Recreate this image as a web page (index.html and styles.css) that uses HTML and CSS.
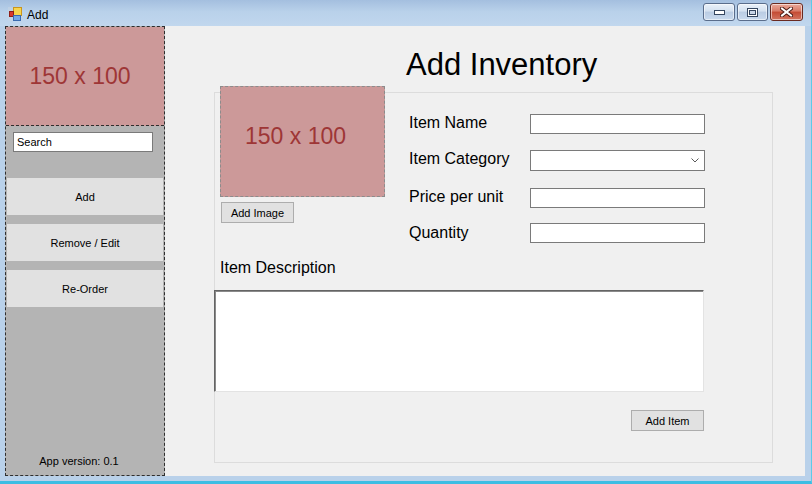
FILE: index.html
```html
<!DOCTYPE html>
<html>
<head>
<meta charset="utf-8">
<title>Add</title>
<link rel="stylesheet" href="styles.css">
</head>
<body>
<div class="window">
  <div class="titlebar">
    <svg class="app-icon" width="14" height="14" viewBox="0 0 14 14">
      <rect x="0" y="0" width="14" height="14" fill="#c9d6e4" opacity="0.5"/>
      <rect x="5.5" y="0.5" width="8" height="8" fill="#f7d54e" stroke="#c9951c"/>
      <rect x="1.5" y="4.5" width="4" height="5" fill="#d8382e" stroke="#8e1f1a"/>
      <rect x="5.5" y="8.5" width="7" height="5" fill="#75a8e6" stroke="#3a6bb0"/>
    </svg>
    <span class="title">Add</span>
    <div class="ctrls">
      <span class="cbtn cmin">
        <svg width="11" height="6" viewBox="0 0 11 6"><rect x="0.5" y="0.5" width="10" height="4" fill="#fff" stroke="#35465f"/></svg>
      </span>
      <span class="cbtn cmax">
        <svg width="11" height="9" viewBox="0 0 11 9"><rect x="0.5" y="0.5" width="10" height="8" fill="#fff" stroke="#35465f"/><rect x="2.5" y="2.5" width="6" height="4" fill="#c8d5e6" stroke="#35465f"/></svg>
      </span>
      <span class="cbtn cclose">
        <svg width="13" height="10" viewBox="0 0 13 10"><path d="M2 1.5 L11 8.5 M11 1.5 L2 8.5" stroke="#4a1a14" stroke-width="4" stroke-linecap="square"/><path d="M2 1.5 L11 8.5 M11 1.5 L2 8.5" stroke="#fff" stroke-width="2" stroke-linecap="square"/></svg>
      </span>
    </div>
  </div>
  <div class="client">
    <aside class="sidebar">
      <div class="ph ph-side"><span>150 x 100</span></div>
      <div class="search">Search</div>
      <div class="navs">
        <div class="navbtn">Add</div>
        <div class="navbtn">Remove / Edit</div>
        <div class="navbtn">Re-Order</div>
      </div>
      <div class="version">App version: 0.1</div>
    </aside>
    <main class="main">
      <h1 class="heading">Add Inventory</h1>
      <section class="group">
        <div class="top">
          <div class="imgcol">
            <div class="ph ph-main"><span>150 x 100</span></div>
            <button class="btn btn-img">Add Image</button>
          </div>
          <div class="form">
            <div class="label">Item Name</div>
            <div class="input"></div>
            <div class="label">Item Category</div>
            <div class="input combo">
              <svg width="8" height="5" viewBox="0 0 8 5"><path d="M0.5 0.5 L4 4 L7.5 0.5" fill="none" stroke="#5a5a5a" stroke-width="1"/></svg>
            </div>
            <div class="label">Price per unit</div>
            <div class="input"></div>
            <div class="label label-q">Quantity</div>
            <div class="input"></div>
          </div>
        </div>
        <div class="desc">
          <div class="desc-label">Item Description</div>
          <div class="textarea"></div>
          <div class="actions"><button class="btn">Add Item</button></div>
        </div>
      </section>
    </main>
  </div>
</div>
</body>
</html>
```

FILE: styles.css
```css
html, body {
  margin: 0;
  padding: 0;
}

body {
  font-family: "Liberation Sans", Arial, sans-serif;
  color: #000;
}

.window {
  width: 812px;
  height: 484px;
  box-sizing: border-box;
  background: #b9d1ea;
  border-right: 1px solid #5ccbe9;
  border-bottom: 3px solid #3cbde3;
  display: flex;
  flex-direction: column;
  overflow: hidden;
}

.titlebar {
  flex: none;
  height: 26px;
  display: flex;
  align-items: center;
  padding-left: 8px;
  background: linear-gradient(#a4bfdf, #b9d1ea 45%, #c1d7ee);
}

.app-icon {
  flex: none;
  margin-top: 1px;
}

.title {
  margin-left: 5px;
  padding-top: 3px;
  font-size: 12px;
  color: #000;
}

.ctrls {
  margin-left: auto;
  margin-right: 8px;
  margin-top: -2px;
  display: flex;
  gap: 2px;
}

.cbtn {
  height: 18px;
  box-sizing: border-box;
  border: 1px solid #5a6d8b;
  border-radius: 3px;
  display: flex;
  align-items: center;
  justify-content: center;
  box-shadow: inset 0 0 0 1px rgba(255, 255, 255, 0.55);
  background: linear-gradient(#eaf1f9, #d4e1f0 45%, #bacce3 50%, #c9daee);
}

.cmin {
  width: 32px;
  align-items: flex-end;
  padding-bottom: 4px;
}

.cmax {
  width: 31px;
}

.cclose {
  width: 33px;
  border-color: #6a2a20;
  background: linear-gradient(#eaa89a, #d77a66 45%, #c44b33 50%, #d27561);
}

.client {
  flex: none;
  height: 450px;
  margin: 0 6px 0 5px;
  display: flex;
}

.sidebar {
  flex: none;
  width: 160px;
  box-sizing: border-box;
  border: 1px dashed #2e2e2e;
  background: #b4b4b4;
  display: flex;
  flex-direction: column;
}

.ph {
  background: #cc9999;
  color: #9e3636;
  font-size: 23px;
  display: flex;
  align-items: center;
  justify-content: center;
  box-sizing: border-box;
}

.ph-side {
  height: 99px;
  border-bottom: 1px dashed #2e2e2e;
  padding-right: 10px;
}

.search {
  margin: 6px 0 0 7px;
  width: 140px;
  height: 20px;
  box-sizing: border-box;
  border: 1px solid #7a7a7a;
  background: #fff;
  font-size: 11px;
  line-height: 18px;
  padding-left: 3px;
}

.navs {
  margin-top: 26px;
  padding: 0 1px;
  display: flex;
  flex-direction: column;
  gap: 9px;
}

.navbtn {
  height: 37px;
  background: #e1e1e1;
  display: flex;
  align-items: center;
  justify-content: center;
  font-size: 11px;
}

.version {
  margin-top: auto;
  padding: 0 12px 7px 0;
  text-align: center;
  font-size: 11px;
  line-height: 13px;
}

.main {
  flex: 1;
  background: #f0f0f0;
  padding-left: 49px;
}

.heading {
  margin: 21px 0 0;
  padding-left: 192px;
  font-size: 31px;
  font-weight: normal;
  line-height: 36px;
}

.group {
  margin-top: 9px;
  width: 559px;
  height: 371px;
  box-sizing: border-box;
  border: 1px solid #dcdcdc;
}

.top {
  display: flex;
  margin-top: -7px;
  padding-left: 5px;
}

.imgcol {
  display: flex;
  flex-direction: column;
  align-items: flex-start;
}

.ph-main {
  width: 165px;
  height: 111px;
  border: 1px dashed #8c8c8c;
  padding: 0 14px 11px 0;
}

.btn {
  width: 73px;
  height: 21px;
  box-sizing: border-box;
  border: 1px solid #adadad;
  background: #e1e1e1;
  font-family: "Liberation Sans", Arial, sans-serif;
  font-size: 11px;
  color: #000;
  padding: 0;
  margin: 0;
}

.btn-img {
  margin: 5px 0 0 1px;
}

.form {
  margin: 28px 0 0 24px;
  display: grid;
  grid-template-columns: 121px 175px;
  grid-template-rows: 36px 38px 35px 20px;
  align-items: start;
}

.label {
  font-size: 16px;
  line-height: 18px;
  margin-top: 0;
}

.label-q {
  margin-top: 1px;
}

.input {
  height: 20px;
  box-sizing: border-box;
  border: 1px solid #7a7a7a;
  background: #fff;
}

.combo {
  height: 21px;
  display: flex;
  align-items: center;
  justify-content: flex-end;
  padding-right: 5px;
}

.desc {
  margin-left: -1px;
  width: 490px;
}

.desc-label {
  margin: 16px 0 0 6px;
  font-size: 16px;
  line-height: 18px;
}

.textarea {
  margin-top: 13px;
  height: 102px;
  box-sizing: border-box;
  background: #fff;
  border-style: solid;
  border-width: 1px;
  border-color: #646464 #e3e3e3 #e3e3e3 #646464;
  box-shadow: inset 1px 1px 0 #8a8a8a;
}

.actions {
  margin-top: 18px;
  display: flex;
  justify-content: flex-end;
}
```
